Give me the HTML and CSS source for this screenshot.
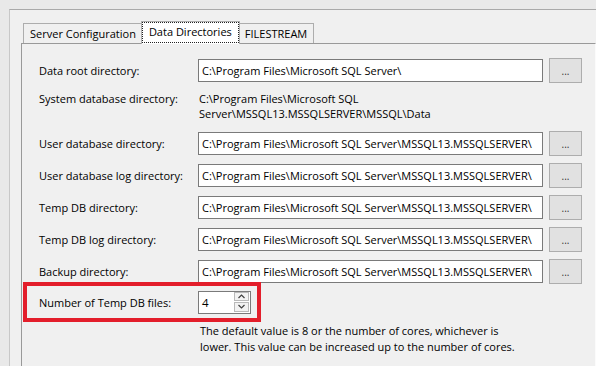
FILE: index.html
```html
<!DOCTYPE html>
<html lang="en">
<head>
    <meta charset="UTF-8">
    <meta name="viewport" content="width=device-width, initial-scale=1.0">
    <title>Data Directories</title>
    <link rel="stylesheet" href="styles.css">
</head>
<body>

    <div class="frame">
        <!-- Tabs -->
        <div class="tabs">
            <div class="tab">Server Configuration</div>
            <div class="tab active">Data Directories</div>
            <div class="tab">FILESTREAM</div>
        </div>

        <div class="panel">
            <div class="row">
                <label>Data root directory:</label>
                <div class="field">C:\Program Files\Microsoft SQL Server\</div>
                <button>...</button>
            </div>

            <div class="row static">
                <label>System database directory:</label>
                <div class="value">C:\Program Files\Microsoft SQL<br>Server\MSSQL13.MSSQLSERVER\MSSQL\Data</div>
            </div>

            <div class="row first">
                <label>User database directory:</label>
                <div class="field">C:\Program Files\Microsoft SQL Server\MSSQL13.MSSQLSERVER\</div>
                <button>...</button>
            </div>

            <div class="row">
                <label>User database log directory:</label>
                <div class="field">C:\Program Files\Microsoft SQL Server\MSSQL13.MSSQLSERVER\</div>
                <button>...</button>
            </div>

            <div class="row">
                <label>Temp DB directory:</label>
                <div class="field">C:\Program Files\Microsoft SQL Server\MSSQL13.MSSQLSERVER\</div>
                <button>...</button>
            </div>

            <div class="row">
                <label>Temp DB log directory:</label>
                <div class="field">C:\Program Files\Microsoft SQL Server\MSSQL13.MSSQLSERVER\</div>
                <button>...</button>
            </div>

            <div class="row">
                <label>Backup directory:</label>
                <div class="field">C:\Program Files\Microsoft SQL Server\MSSQL13.MSSQLSERVER\</div>
                <button>...</button>
            </div>

            <!-- Destaque em vermelho -->
            <div class="highlight">
                <label>Number of Temp DB files:</label>
                <div class="spin">
                    <span class="spin-value">4</span>
                    <div class="spin-buttons">
                        <span class="spin-btn">
                            <svg width="7" height="5" viewBox="0 0 7 5"><polyline points="0.5,4 3.5,1 6.5,4" fill="none" stroke="#404040" stroke-width="1.2"/></svg>
                        </span>
                        <span class="spin-btn">
                            <svg width="7" height="5" viewBox="0 0 7 5"><polyline points="0.5,1 3.5,4 6.5,1" fill="none" stroke="#404040" stroke-width="1.2"/></svg>
                        </span>
                    </div>
                </div>
            </div>

            <p class="note">The default value is 8 or the number of cores, whichever is<br>lower. This value can be increased up to the number of cores.</p>
        </div>
    </div>

</body>
</html>
```

FILE: styles.css
```css
html, body {
    overflow: hidden;
}

body {
    margin: 0;
    background: #e9e9e9;
    font-family: "Segoe UI", "Open Sans", sans-serif;
    font-size: 11px;
    color: #000;
}

.frame {
    margin: 9px 0 0 9px;
    padding: 11px 0 0 11px;
    border-top: 1px solid #a9a9a9;
    border-left: 1px solid #c8c8c8;
    background: #f0f0f0;
}

/* Tabs */
.tabs {
    display: flex;
    align-items: flex-end;
    height: 22px;
    padding-left: 2px;
}

.tab {
    height: 19px;
    line-height: 19px;
    padding: 0 6px;
    border: 1px solid #adadad;
    border-bottom: 0;
    background: #f0f0f0;
}

.tab.active {
    position: relative;
    z-index: 1;
    height: 22px;
    margin: 0 -2px -1px;
    padding: 0 7px;
    background: #fff;
    outline: 1px dotted #222;
    outline-offset: -2px;
}

/* Painel */
.panel {
    padding: 14px 0 40px 17px;
    border: 1px solid #999;
    border-right-color: #fbfbfb;
    border-bottom: 0;
    background: #f0f0f0;
}

.row {
    display: flex;
    align-items: center;
    height: 25px;
    margin-top: 7px;
}

.row:first-child {
    margin-top: 0;
}

.row.static {
    align-items: flex-start;
    height: auto;
    margin-top: 8px;
    line-height: 15px;
}

.row.first {
    margin-top: 10px;
}

label {
    flex: none;
    width: 159px;
}

.value {
    margin-left: 1px;
}

.field {
    flex: none;
    box-sizing: border-box;
    width: 345px;
    height: 23px;
    padding: 0 3px;
    line-height: 21px;
    border: 1px solid #7a7a7a;
    background: #fff;
    white-space: nowrap;
    overflow: hidden;
}

button {
    flex: none;
    width: 33px;
    height: 25px;
    margin-left: 6px;
    padding: 0;
    border: 1px solid #adadad;
    background: #e1e1e1;
    font-family: inherit;
    font-size: 10px;
    color: #333;
}

/* Caixa vermelha */
.highlight {
    position: relative;
    z-index: 1;
    display: flex;
    align-items: center;
    box-sizing: border-box;
    width: 238px;
    height: 40px;
    margin: -2px 0 0 -16px;
    padding-left: 12px;
    border: 4px solid #e31e2b;
}

.spin {
    display: flex;
    box-sizing: border-box;
    width: 53px;
    height: 23px;
    border: 1px solid #7a7a7a;
    background: #fff;
}

.spin-value {
    flex: 1;
    padding-left: 3px;
    line-height: 21px;
    font-size: 11.5px;
}

.spin-buttons {
    display: flex;
    flex-direction: column;
    gap: 1px;
    width: 15px;
    padding: 0 1px 1px 0;
}

.spin-btn {
    display: flex;
    align-items: center;
    justify-content: center;
    flex: 1;
    border: 1px solid #b9b9b9;
    background: #f2f2f2;
}

.note {
    margin: 1px 0 0 161px;
    line-height: 16px;
}
```
